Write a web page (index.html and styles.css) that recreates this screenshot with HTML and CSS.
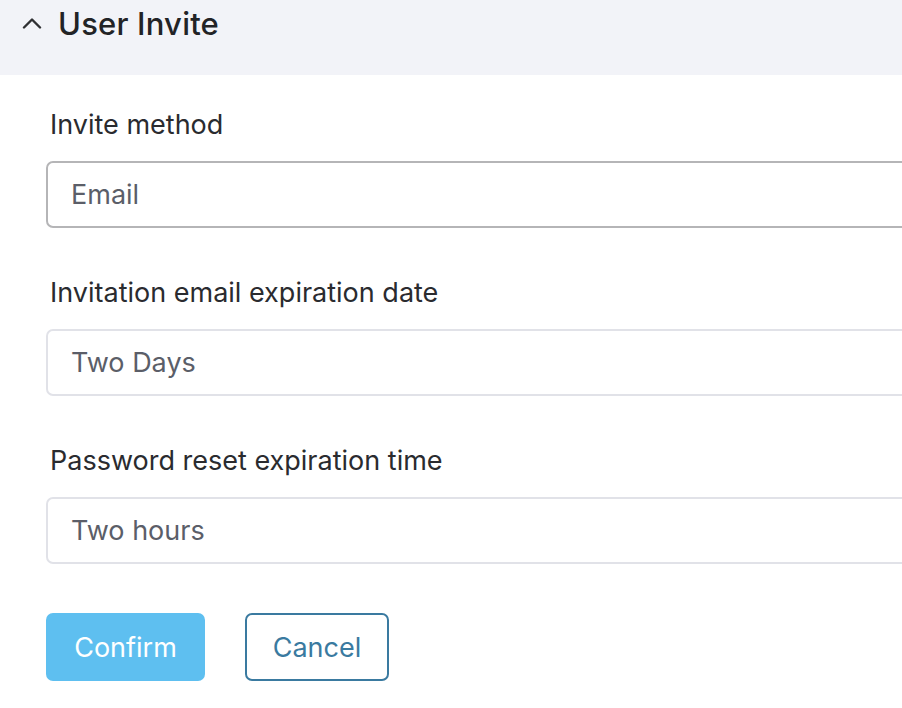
FILE: index.html
```html
<!DOCTYPE html>
<html lang="en">
<head>
<meta charset="utf-8">
<title>User Invite</title>
<link rel="stylesheet" href="styles.css">
</head>
<body>
<div class="panel">
  <div class="panel-header">
    <svg class="chevron" width="20" height="12" viewBox="0 0 20 12" aria-hidden="true">
      <path d="M2 10.5 L10 2.5 L18 10.5" fill="none" stroke="#2f3033" stroke-width="2.4" stroke-linecap="round" stroke-linejoin="round"/>
    </svg>
    <h2 class="panel-title">User Invite</h2>
  </div>
  <form class="panel-body">
    <div class="field">
      <label class="field-label">Invite method</label>
      <div class="select select-active">Email</div>
    </div>
    <div class="field">
      <label class="field-label">Invitation email expiration date</label>
      <div class="select">Two Days</div>
    </div>
    <div class="field">
      <label class="field-label">Password reset expiration time</label>
      <div class="select">Two hours</div>
    </div>
    <div class="actions">
      <button type="button" class="btn btn-primary">Confirm</button>
      <button type="button" class="btn btn-outline">Cancel</button>
    </div>
  </form>
</div>
</body>
</html>
```
FILE: styles.css
```css
html, body {
  margin: 0;
  padding: 0;
  background: #ffffff;
  overflow: hidden;
}
body {
  font-family: Inter, "Noto Sans", "Liberation Sans", sans-serif;
  color: #26272b;
  width: 902px;
  height: 708px;
}
.panel {
  width: 902px;
  height: 708px;
  overflow: hidden;
}
.panel-header {
  height: 75px;
  background: #f2f3f8;
  box-sizing: border-box;
  padding-left: 22px;
  display: flex;
  align-items: flex-start;
  gap: 16px;
}
.chevron {
  margin-top: 17px;
  flex: none;
}
.panel-title {
  margin: 0;
  font-size: 31px;
  font-weight: 500;
  line-height: 48px;
  color: #222326;
  letter-spacing: 0.2px;
}
.panel-body {
  padding: 34px 0 0 46px;
  margin: 0;
}
.field {
  margin-bottom: 49px;
}
.field:last-of-type {
  margin-bottom: 49px;
}
.field-label {
  display: block;
  font-size: 27px;
  line-height: 32px;
  color: #2a2b2f;
  padding-left: 4px;
  margin-bottom: 20px;
}
.select {
  box-sizing: border-box;
  width: 900px;
  height: 67px;
  border: 2px solid #e1e2e8;
  border-radius: 7px;
  padding-left: 23px;
  display: flex;
  align-items: center;
  font-size: 27px;
  color: #5b5e68;
  background: #fff;
}
.select-active {
  border-color: #b5b5b7;
}
.actions {
  display: flex;
  gap: 40px;
}
.btn {
  box-sizing: border-box;
  height: 68px;
  border-radius: 7px;
  font-family: inherit;
  font-size: 27px;
  padding: 0;
  cursor: pointer;
}
.btn-primary {
  width: 159px;
  background: #5ebff0;
  border: none;
  color: #ffffff;
}
.btn-outline {
  width: 144px;
  background: #ffffff;
  border: 2px solid #3a7aa0;
  color: #3a7aa0;
}
```
